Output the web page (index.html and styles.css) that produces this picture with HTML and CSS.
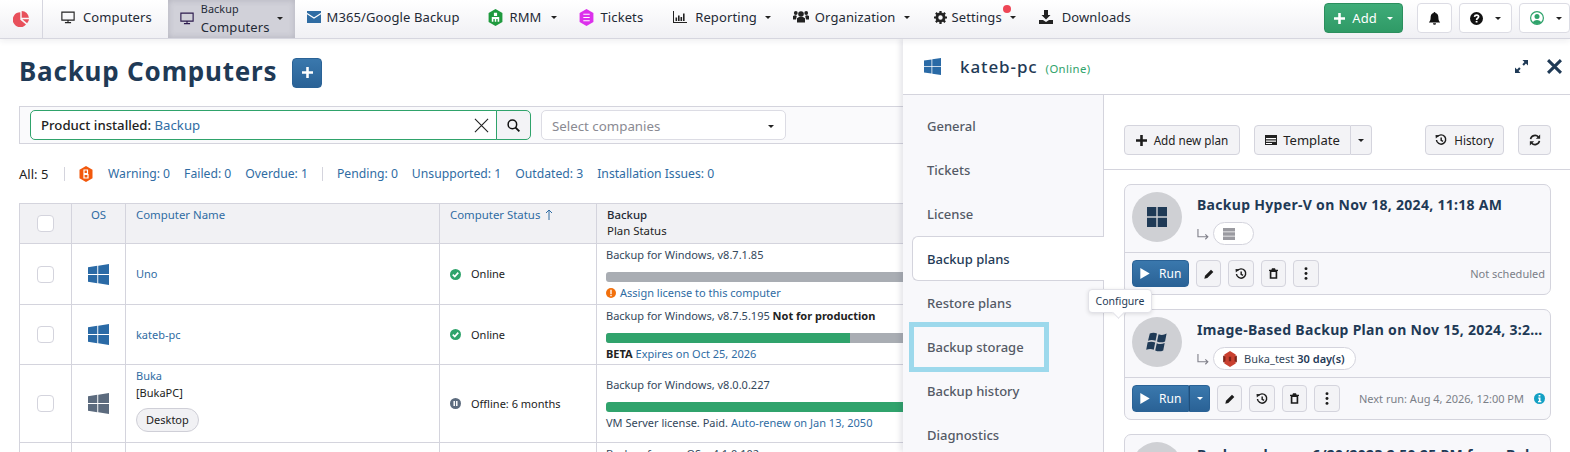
FILE: index.html
```html
<!DOCTYPE html>
<html lang="en">
<head>
<meta charset="utf-8">
<title>Backup Computers</title>
<link rel="stylesheet" href="styles.css">
</head>
<body>
<svg class="defs" width="0" height="0" aria-hidden="true">
  <symbol id="win" viewBox="0 0 24 24"><path d="M0 3.600 10.600 2.100V11.500H0ZM11.700 1.900 24 0V11.500H11.700ZM0 12.600H10.600V21.900L0 20.400ZM11.700 12.600H24V24L11.700 22.100Z"/></symbol>
  <symbol id="desk" viewBox="0 0 16 16"><path fill="none" stroke="currentColor" stroke-width="1.300" d="M1 2.500h14v9H1zM8 11.500v2.500M4.500 14.500h7"/></symbol>
  <symbol id="plus" viewBox="0 0 12 12"><path d="M4.600 0h2.800v4.600H12v2.800H7.400V12H4.600V7.400H0V4.600h4.600z"/></symbol>
  <symbol id="hist" viewBox="0 0 14 14"><path fill="none" stroke="currentColor" stroke-width="1.700" d="M2.600 3.400A5.400 5.400 0 1 1 1.700 7M7.200 4v3.300L9.400 8.600"/><path d="M.6 1.200 4.800 1.600 1 5.200z"/></symbol>
  <symbol id="pen" viewBox="0 0 12 12"><path d="M8.400.8 11.200 3.600 4 10.800.4 11.600 1.200 8z"/></symbol>
  <symbol id="trash" viewBox="0 0 12 14"><path fill-rule="evenodd" d="M4 0h4l.8 2H12v1.500H11V14H1V3.500H0V2h3.200zM3.200 5v7h5.600V5z"/></symbol>
  <symbol id="dots" viewBox="0 0 4 16"><circle cx="2" cy="2" r="1.800"/><circle cx="2" cy="8" r="1.800"/><circle cx="2" cy="14" r="1.800"/></symbol>
  <symbol id="check" viewBox="0 0 12 12"><circle cx="6" cy="6" r="6" fill="currentColor"/><path fill="none" stroke="#fff" stroke-width="1.800" d="M3 6.200 5.200 8.300 9 4"/></symbol>
  <symbol id="play" viewBox="0 0 12 14"><path fill="#fff" d="M0 0 12 7 0 14z"/></symbol>
  <symbol id="branch" viewBox="0 0 13 12"><path fill="none" stroke="currentColor" stroke-width="1.200" d="M1 0v8.500h10.500M9 5.800l2.800 2.700L9 11.200"/></symbol>
</svg>

<header class="topbar">
  <a class="logo"><svg class="ic16" viewBox="0 0 16 16"><path fill="#e8505b" d="M7.300 1.200V8.700L13 13.500A7.500 7.500 0 1 1 7.300 1.200Z"/><path fill="#e8505b" d="M8.700 0A7.400 7.400 0 0 1 15.900 6.800H8.700Z"/><path fill="#e8505b" d="M9.300 8.200H16A7.400 7.400 0 0 1 14.100 12.300Z"/></svg></a>
  <a class="nav nav-first"><svg class="ic14 ink"><use href="#desk"/></svg>Computers</a>
  <a class="nav nav-on"><svg class="ic14 purple"><use href="#desk"/></svg><span class="stack"><small>Backup</small><span>Computers</span></span><i class="caret"></i></a>
  <a class="nav after-on g6"><svg class="ic14" viewBox="0 0 14 12"><path fill="#2f6ca3" d="M0 0h14v12H0z"/><path fill="none" stroke="#fff" stroke-width="1.100" d="M0 2.500 7 7l7-4.500"/></svg>M365/Google Backup</a>
  <a class="nav has-caret g7 nav-rmm"><svg class="hexi" viewBox="0 0 14 16"><path fill="#1f9a3e" d="M7 0l6.500 3.800v8.400L7 16 .5 12.200V3.800z"/><path fill="#fff" d="M5.500 3.500h3v3h-3zM3.500 7.500h7V12h-1.500V9.500H7.700V12H6.300V9.500H5V12H3.500z"/></svg>RMM<i class="caret"></i></a>
  <a class="nav g7 nav-tickets"><svg class="hexi" viewBox="0 0 14 16"><path fill="#dc30ec" d="M7 0l6.500 3.800v8.400L7 16 .5 12.200V3.800z"/><path fill="none" stroke="#fff" stroke-width="1" d="M4 5h6M4 8h6M4 11h6"/></svg>Tickets</a>
  <a class="nav has-caret nav-report"><svg class="ic14" viewBox="0 0 14 12"><path fill="#222" d="M0 0h1v11h13v1H0zM2.500 6.500h1.600V10H2.500zM5 4.500h1.600V10H5zM7.500 6h1.600v4H7.500zM10 2.500h1.600V10H10z"/></svg>Reporting<i class="caret"></i></a>
  <a class="nav has-caret g6"><svg class="ic16" viewBox="0 0 16 14"><circle cx="8" cy="4" r="2.800" fill="#222"/><circle cx="2.800" cy="3" r="1.900" fill="#222"/><circle cx="13.200" cy="3" r="1.900" fill="#222"/><path fill="#222" d="M4 8.200Q8 5.500 12 8.200V12.500H4zM0 6q2.500-1.500 3.800 0L3 9.500H0zM16 6q-2.500-1.500-3.800 0l.8 3.500H16z"/></svg>Organization<i class="caret"></i></a>
  <a class="nav has-caret g4 nav-settings"><svg class="ic13" viewBox="0 0 14 14"><circle cx="7" cy="7" r="3.900" fill="none" stroke="#222" stroke-width="3"/><path fill="none" stroke="#222" stroke-width="2.400" d="M7 0v2.500M7 11.500V14M0 7h2.500M11.500 7H14M2 2l1.800 1.800M10.200 10.200 12 12M12 2l-1.800 1.800M3.800 10.200 2 12"/></svg><span class="dotted">Settings<b class="alert"></b></span><i class="caret tight"></i></a>
  <a class="nav g9"><svg class="ic14" viewBox="0 0 14 14"><path fill="#222" d="M5 0h4v5h2.500L7 9.500 2.500 5H5zM0 10h4l3 2 3-2h4v4H0z"/></svg>Downloads</a>
  <span class="grow"></span>
  <button class="add"><svg class="ic11 white"><use href="#plus"/></svg>Add<i class="caret white-c"></i></button>
  <button class="tool bell"><svg class="ic13" viewBox="0 0 14 15"><path fill="#111" d="M7 0a1 1 0 0 1 1 1.200C10.500 1.800 11.500 3.800 11.500 6.500c0 2.500.8 3.800 2 5.500H.5c1.200-1.700 2-3 2-5.500C2.500 3.800 3.500 1.800 6 1.200A1 1 0 0 1 7 0ZM5.200 13h3.600a1.800 1.800 0 0 1-3.600 0Z"/></svg></button>
  <button class="tool help"><svg class="ic13" viewBox="0 0 14 14"><circle cx="7" cy="7" r="7" fill="#111"/><path fill="none" stroke="#fff" stroke-width="1.800" d="M4.800 5.300C5 3.900 6 3.400 7.100 3.400c1.300 0 2.200.8 2.200 1.800 0 1.600-2.200 1.500-2.200 3.300"/><path fill="#fff" d="M6.100 9.600h2v1.700h-2z"/></svg><i class="caret"></i></button>
  <button class="tool user"><svg class="ic14" viewBox="0 0 14 14"><circle cx="7" cy="7" r="6.400" fill="none" stroke="#2fa36b" stroke-width="1.200"/><circle cx="7" cy="5.400" r="2.500" fill="#2fa36b"/><path fill="#2fa36b" d="M2.500 11.200Q7 6.800 11.500 11.200 7 15 2.500 11.200Z"/></svg><i class="caret"></i></button>
</header>

<div class="page">
  <main class="main">
    <div class="title-row">
      <h1>Backup Computers</h1>
      <button class="plus-btn"><svg class="ic11 white"><use href="#plus"/></svg></button>
    </div>
    <div class="filters">
      <div class="search"><span class="search-text"><b>Product installed:</b> <a>Backup</a></span><svg class="x-ic" viewBox="0 0 16 16"><path fill="none" stroke="#222" stroke-width="1.200" d="M1 1l14 14M15 1 1 15"/></svg></div>
      <button class="search-go"><svg class="ic13" viewBox="0 0 14 14"><circle cx="5.800" cy="5.800" r="4.600" fill="none" stroke="#111" stroke-width="1.600"/><path stroke="#111" stroke-width="2" d="M9 9l4.300 4.300"/></svg></button>
      <div class="select"><span>Select companies</span><i class="caret"></i></div>
    </div>
    <div class="stats">
      <span class="all">All: 5</span><span class="sep"></span>
      <svg class="hex" viewBox="0 0 14 16"><path fill="#f2580c" d="M7 0l6.500 3.800v8.400L7 16 .5 12.200V3.800z"/><path fill="none" stroke="#fff" stroke-width="1.200" d="M5 4h3.500v3.500H5zM5 8.500h4V12H5z"/></svg>
      <a>Warning: 0</a><a>Failed: 0</a><a>Overdue: 1</a><span class="sep wide"></span>
      <a>Pending: 0</a><a>Unsupported: 1</a><a>Outdated: 3</a><a>Installation Issues: 0</a>
    </div>
    <table class="grid">
      <colgroup><col class="c1"><col class="c2"><col class="c3"><col class="c4"><col class="c5"></colgroup>
      <thead>
        <tr class="r-head">
          <th class="mid"><span class="cb"></span></th>
          <th class="ctr"><a>OS</a></th>
          <th><a>Computer Name</a></th>
          <th><a>Computer Status<svg class="arrow" viewBox="0 0 8 11"><path fill="none" stroke="currentColor" stroke-width="1" d="M4 11V1M1 4l3-3 3 3"/></svg></a></th>
          <th class="plan-h"><b>Backup</b><span>Plan Status</span></th>
        </tr>
      </thead>
      <tbody>
        <tr class="r1">
          <td class="mid"><span class="cb"></span></td>
          <td class="ctr"><svg class="os"><use href="#win"/></svg></td>
          <td><a>Uno</a></td>
          <td><span class="st"><svg class="ic11 green"><use href="#check"/></svg>Online</span></td>
          <td class="plan"><div>Backup for Windows, v8.7.1.85</div><div class="bar"></div><div><svg class="warn" viewBox="0 0 12 12"><circle cx="6" cy="6" r="6" fill="#f2700c"/><path fill="#fff" d="M5.200 2.200h1.600v5H5.200zM5.200 8.200h1.600v1.600H5.200z"/></svg><a>Assign license to this computer</a></div></td>
        </tr>
        <tr class="r2">
          <td class="mid"><span class="cb"></span></td>
          <td class="ctr"><svg class="os"><use href="#win"/></svg></td>
          <td><a>kateb-pc</a></td>
          <td><span class="st"><svg class="ic11 green"><use href="#check"/></svg>Online</span></td>
          <td class="plan"><div>Backup for Windows, v8.7.5.195 <b>Not for production</b></div><div class="bar"><span class="fill" style="width:244px"></span></div><div><b>BETA</b> <a>Expires on Oct 25, 2026</a></div></td>
        </tr>
        <tr class="r3">
          <td class="mid"><span class="cb"></span></td>
          <td class="ctr"><svg class="os off"><use href="#win"/></svg></td>
          <td class="name3"><a>Buka</a><div class="alias">[BukaPC]</div><span class="pill">Desktop</span></td>
          <td><span class="st"><svg class="ic11" viewBox="0 0 12 12"><circle cx="6" cy="6" r="6" fill="#5c6b7e"/><path fill="#fff" d="M3.800 3.200h1.600v5.600H3.800zM6.600 3.200h1.600v5.600H6.600z"/></svg>Offline: 6 months</span></td>
          <td class="plan"><div>Backup for Windows, v8.0.0.227</div><div class="bar"><span class="fill" style="width:100%"></span></div><div>VM Server license. Paid. <a>Auto-renew on Jan 13, 2050</a></div></td>
        </tr>
        <tr class="r4">
          <td></td><td></td><td></td><td></td>
          <td class="plan"><div>Backup for macOS, v4.1.0.102</div></td>
        </tr>
      </tbody>
    </table>
  </main>

  <aside class="panel">
    <div class="p-head">
      <svg class="p-win"><use href="#win"/></svg>
      <span class="p-name">kateb-pc</span><span class="p-online">(Online)</span>
      <span class="grow"></span>
      <svg class="p-exp" viewBox="0 0 14 14"><path fill="#1f3a56" d="M8 0h6v6l-2.200-2.200-2.300 2.300-1.600-1.600 2.300-2.300zM6 14H0V8l2.200 2.200 2.300-2.300 1.600 1.600-2.300 2.300z"/></svg>
      <svg class="p-x" viewBox="0 0 14 14"><path fill="none" stroke="#1f3a56" stroke-width="2.800" d="M1 1l12 12M13 1 1 13"/></svg>
    </div>
    <div class="p-body">
      <nav class="side">
        <a>General</a><a>Tickets</a><a>License</a><a class="on">Backup plans</a><a>Restore plans</a><a class="hl">Backup storage</a><a>Backup history</a><a>Diagnostics</a>
      </nav>
      <section class="content">
        <div class="toolbar">
          <button class="btn w-add"><svg class="ic11 dark"><use href="#plus"/></svg>Add new plan</button>
          <div class="split"><button class="btn tpl"><svg class="ic12" viewBox="0 0 12 10"><path fill="#222" d="M0 0h12v10H0z"/><path fill="#fff" d="M1 3h10v1.200H1zM1 5.500h10v1.200H1zM1 8h6v1H1z"/></svg>Template</button><button class="btn caret-b"><i class="caret"></i></button></div>
          <span class="grow"></span>
          <button class="btn w-hist"><svg class="ic12 dark"><use href="#hist"/></svg>History</button>
          <button class="btn sq"><svg class="ic12" viewBox="0 0 14 14"><path fill="none" stroke="#222" stroke-width="1.900" d="M1.800 6A5.300 5.300 0 0 1 11 3.500M12.200 8A5.300 5.300 0 0 1 3 10.500"/><path fill="#222" d="M13 .5v5h-5zM1 13.500v-5h5z"/></svg></button>
        </div>
        <div class="cards">
          <article class="card">
            <div class="card-top">
              <span class="avatar"><svg class="ic20" viewBox="0 0 20 20"><path fill="#1f3a56" d="M0 0h9.300v9.300H0zM10.700 0H20v9.300h-9.300zM0 10.700h9.300V20H0zM10.700 10.700H20V20h-9.300z"/></svg></span>
              <div class="card-info">
                <h3>Backup Hyper-V on Nov 18, 2024, 11:18 AM</h3>
                <div class="dest"><svg class="branch"><use href="#branch"/></svg><span class="dest-pill empty"><svg class="ic12" viewBox="0 0 12 12"><path fill="#9a9aa0" d="M0 0h12v3.400H0zM0 4.300h12v3.400H0zM0 8.600h12V12H0z"/></svg></span></div>
              </div>
            </div>
            <div class="card-foot">
              <button class="run"><svg class="ic-play"><use href="#play"/></svg>Run</button>
              <button class="btn act"><svg class="ic10 dark"><use href="#pen"/></svg></button>
              <button class="btn act wide-act"><svg class="ic12 dark"><use href="#hist"/></svg></button>
              <button class="btn act"><svg class="ic-tr dark"><use href="#trash"/></svg></button>
              <button class="btn act wide-act"><svg class="ic-dots dark"><use href="#dots"/></svg></button>
              <span class="grow"></span>
              <span class="sched">Not scheduled</span>
            </div>
          </article>
          <article class="card">
            <div class="card-top">
              <span class="avatar"><svg class="ic24" viewBox="0 0 20 20"><path fill="#1f3a56" d="M4 3Q7 1.500 10 3L8.800 9Q5.500 7.500 2.500 9ZM11.300 3.500Q14.500 5 18 3L16.700 9.500Q13.500 11 10 9.500ZM2.200 10.300Q5.500 9 8.500 10.500L7.300 16.500Q4.500 15 1 16.500ZM9.800 11Q13 12.500 16.400 10.800L15.200 17Q12 18.500 8.500 17Z"/></svg></span>
              <div class="card-info">
                <h3>Image-Based Backup Plan on Nov 15, 2024, 3:26 PM</h3>
                <div class="dest"><svg class="branch"><use href="#branch"/></svg><span class="dest-pill"><svg class="s3" viewBox="0 0 12 14"><path fill="#c9402f" d="M6 0l5 3v8l-5 3-5-3V3z"/><path fill="#7e2318" d="M0 4l2 1v4l-2 1zM12 4l-2 1v4l2 1zM5 5h2v4H5z"/></svg>Buka_test <b>30 day(s)</b></span></div>
              </div>
            </div>
            <div class="card-foot">
              <span class="run-split"><button class="run joined"><svg class="ic-play"><use href="#play"/></svg>Run</button><button class="run-c"><i class="caret white-c"></i></button></span>
              <button class="btn act"><svg class="ic10 dark"><use href="#pen"/></svg></button>
              <button class="btn act wide-act"><svg class="ic12 dark"><use href="#hist"/></svg></button>
              <button class="btn act"><svg class="ic-tr dark"><use href="#trash"/></svg></button>
              <button class="btn act wide-act"><svg class="ic-dots dark"><use href="#dots"/></svg></button>
              <span class="grow"></span>
              <span class="sched">Next run: Aug 4, 2026, 12:00 PM</span>
              <svg class="info" viewBox="0 0 12 12"><circle cx="6" cy="6" r="6" fill="#14a0c4"/><path fill="#fff" d="M5 2.200h2v1.700H5zM4.600 5h2.500v3.800h.9V10H4.400V8.800h.9V6.200h-.7z"/></svg>
            </div>
          </article>
          <article class="card">
            <div class="card-top">
              <span class="avatar"></span>
              <div class="card-info"><h3>Backup plan on 6/20/2023 2:50:25 PM from Buka</h3></div>
            </div>
          </article>
        </div>
      </section>
    </div>
    <div class="tooltip">Configure</div>
  </aside>
</div>
</body>
</html>
```

FILE: styles.css
```css
* { box-sizing: border-box; }
html, body { margin: 0; height: 100%; }
body { width: 1570px; height: 452px; overflow: hidden; background: #fff; font-family: "Noto Sans", "Open Sans", sans-serif; font-size: 11px; color: #222; }
button { font: inherit; padding: 0; margin: 0; cursor: pointer; }
svg { fill: currentColor; flex: none; }
.defs { position: absolute; }
a { color: inherit; text-decoration: none; }
.grow { flex: 1; }

.ic10 { width: 10px; height: 10px; }
.ic11 { width: 11px; height: 11px; }
.ic12 { width: 12px; height: 12px; }
.ic13 { width: 13px; height: 13px; }
.ic14 { width: 14px; height: 14px; }
.ic16 { width: 16px; height: 16px; }
.ic20 { width: 20px; height: 20px; }
.ic24 { width: 24px; height: 24px; }
.ink { color: #222; }
.purple { color: #2c1a4d; }
.white { color: #fff; }
.dark { color: #1c1c1c; }
.green { color: #2fa36b; }

.caret { display: inline-block; width: 0; height: 0; margin-left: 8px; border-left: 3.5px solid transparent; border-right: 3.5px solid transparent; border-top: 3.5px solid #222; }
.white-c { border-top-color: #fff; }

/* top bar */
.topbar { display: flex; align-items: stretch; height: 39px; border-bottom: 1px solid #d6d6df; background: linear-gradient(#fff, #f0f0f4); box-shadow: 0 2px 6px rgba(40,40,70,.08); position: relative; z-index: 3; }
.logo { width: 43px; border-right: 1px solid #d6d6df; display: flex; align-items: center; justify-content: center; }
.nav { display: flex; align-items: center; padding: 0 13px 4px 15px; font-size: 13px; color: #1f2a36; letter-spacing: .1px; }
.nav svg { margin-right: 8px; }
.nav .caret { margin-left: 9px; }
.nav .caret.tight { margin-left: 8px; }
.has-caret { padding-right: 9px; }
.g4 svg { margin-right: 4px; }
.g6 svg { margin-right: 6px; }
.g7 svg { margin-right: 7px; }
.g9 svg { margin-right: 9px; }
.hexi { width: 15px; height: 17px; }
.nav-first { padding-left: 18px; padding-right: 16px; }
.after-on { padding-left: 12px; }
.nav-rmm { padding-right: 7px; }
.nav-tickets { padding-right: 15px; }
.nav-report { padding-right: 7px; }
.nav-report .caret { margin-left: 8px; }
.nav-settings { padding-right: 8px; }
.nav-on { background: #d1d1d9; box-shadow: inset 0 0 6px rgba(60,60,80,.2); padding: 1px 12px 0 12px; }
.nav-on svg { margin-right: 7px; margin-bottom: 3px; }
.nav-on .caret { margin-left: 7px; margin-bottom: 3px; }
.stack { display: flex; flex-direction: column; }
.stack small { font-size: 10.8px; line-height: 12px; margin-bottom: 3px; }
.stack span { line-height: 18px; }
.dotted { position: relative; }
.alert { position: absolute; right: -9px; top: -3px; width: 8px; height: 8px; border-radius: 50%; background: #ee4656; }
.add { align-self: flex-start; width: 79px; height: 30px; margin: 3px 14px 0 0; display: flex; align-items: center; justify-content: center; gap: 7px; color: #fff; font-size: 13px; background: linear-gradient(#3fac79, #2f9a66); border: 1px solid #2b8f5e; border-radius: 4px; }
.add .caret { margin-left: 3px; }
.tool { align-self: flex-start; height: 30px; margin: 3px 7px 0 0; display: flex; align-items: center; background: #fff; border: 1px solid #dcdce4; border-radius: 4px; padding-left: 10px; }
.tool .caret { margin-left: 12px; }
.bell { width: 35px; justify-content: center; padding-left: 0; }
.help { width: 53px; }
.user { width: 51px; margin-right: 0; }

/* main */
.page { position: relative; height: 413px; overflow: hidden; }
.main { padding: 0 0 0 19px; width: 1500px; }
.title-row { display: flex; align-items: center; gap: 15px; height: 67px; }
h1 { margin: 0 0 3px; font-size: 26px; font-weight: 700; color: #1f3a56; letter-spacing: .8px; }
.plus-btn { width: 30px; height: 30px; display: flex; align-items: center; justify-content: center; background: linear-gradient(#3a78ad, #2a6296); border: 1px solid #2a6296; border-radius: 4px; }
.filters { display: flex; align-items: center; width: 1000px; height: 38px; padding-left: 10px; border: 1px solid #d4d4dd; background: #fafafc; }
.search { display: flex; align-items: center; justify-content: space-between; width: 467px; height: 30px; padding: 0 7px 0 10px; background: #fff; border: 1px solid #2fa36b; border-radius: 5px 0 0 5px; font-size: 13.2px; }
.search b { font-weight: 500; color: #222; }
.search a { color: #2f6ca3; }
.x-ic { width: 15px; height: 15px; }
.search-go { width: 35px; height: 30px; margin-left: -1px; display: flex; align-items: center; justify-content: center; background: #f3f3f6; border: 1px solid #2fa36b; border-radius: 0 5px 5px 0; }
.select { display: flex; align-items: center; justify-content: space-between; width: 245px; height: 30px; margin-left: 10px; padding: 2px 11px 0 10px; background: #fff; border: 1px solid #dcdce4; border-radius: 5px; font-size: 13.3px; color: #8a8a92; }
.stats { display: flex; align-items: center; height: 59px; color: #2f6ca3; font-size: 12.2px; gap: 14px; }
.all { color: #222; font-size: 13px; width: 31px; }
.sep { width: 1px; height: 14px; background: #d4d4dd; }
.hex { width: 14px; height: 16px; margin-right: 1px; }
.grid { table-layout: fixed; width: 1200px; border-collapse: collapse; }
.c1 { width: 52px; } .c2 { width: 54px; } .c3 { width: 314px; } .c4 { width: 157px; }
.grid th, .grid td { border: 1px solid #d4d4dd; padding: 0 10px; font-weight: 400; text-align: left; vertical-align: middle; font-size: 11px; line-height: 16px; color: #222; overflow: hidden; white-space: nowrap; }
.grid thead th { background: #f1f1f4; vertical-align: top; padding-top: 3px; color: #2f6ca3; font-size: 11.4px; }
.grid thead th.mid { vertical-align: middle; padding-top: 0; }
.grid a { color: #2f6ca3; }
.grid .mid, .grid .ctr { text-align: center; padding-left: 0; padding-right: 0; }
.arrow { width: 8px; height: 11px; margin-left: 5px; vertical-align: -1px; }
.grid thead .plan-h { color: #222; padding-top: 3px; }
.plan-h b { display: block; font-weight: 500; color: #1f2a36; }
.plan-h span { display: block; }
.r-head { height: 40px; }
.r1 { height: 61px; }
.r2 { height: 60px; }
.r3 { height: 78px; }
.r4 { height: 30px; }
.r4 td { vertical-align: top; }
.grid .r4 .plan { padding-top: 3px; }
.cb { display: inline-block; vertical-align: middle; width: 17px; height: 17px; background: #fff; border: 1px solid #d4d4dd; border-radius: 4px; }
.os { width: 21px; height: 21px; color: #2a6aa6; vertical-align: middle; }
.os.off { color: #5c6b7e; }
.st { display: flex; align-items: center; gap: 10px; }
.grid .plan { padding-left: 9px; color: #33475b; }
.plan b { font-weight: 700; color: #222; }
.bar { position: relative; height: 10px; margin: 9px 0 3px; background: #a9adb3; border-radius: 3px 0 0 3px; overflow: hidden; }
.fill { display: block; height: 10px; background: #30a36c; }
.warn { width: 10px; height: 10px; margin-right: 4px; vertical-align: -1px; }
.grid .name3 { line-height: 17px; padding-bottom: 8px; }
.alias { color: #222; }
.pill { display: inline-block; margin-top: 7px; height: 24px; line-height: 21px; padding: 0 9px; background: #f1f1f4; border: 1px solid #cfcfd7; border-radius: 12px; color: #222; }

/* panel */
.panel { position: absolute; left: 903px; top: 0; right: 0; bottom: 0; background: #fff; box-shadow: -3px 0 5px rgba(50,50,80,.12); z-index: 2; }
.p-head { display: flex; align-items: center; height: 56px; padding: 0 8px 0 21px; border-bottom: 1px solid #d4d4dd; }
.p-win { width: 17px; height: 17px; color: #2a6aa6; margin-right: 19px; }
.p-name { font-size: 17px; font-weight: 500; color: #1f3a56; letter-spacing: .9px; }
.p-online { margin-left: 8px; margin-top: 4px; font-size: 11.3px; color: #2fa36b; letter-spacing: .4px; }
.p-exp { width: 13px; height: 13px; margin-right: 19px; }
.p-x { width: 15px; height: 15px; }
.p-body { display: flex; height: 357px; }
.side { width: 201px; flex: none; padding: 9px 0 0 9px; background: #f8f8fb; border-right: 1px solid #d4d4dd; display: flex; flex-direction: column; }
.side a { display: flex; align-items: center; height: 44px; flex: none; padding-left: 15px; font-size: 13px; font-weight: 500; color: #545a66; position: relative; }
.side .on { background: #fff; color: #1f3a56; width: 192px; height: 45px; border: 1px solid #d4d4dd; border-right: 0; border-radius: 6px 0 0 6px; padding-left: 14px; }
.side .hl { width: 140px; height: 50px; margin: -3px 0 -3px -3px; padding-left: 13px; border: 5px solid #9dd9ec; }
.content { flex: 1; min-width: 0; }
.toolbar { display: flex; align-items: flex-start; gap: 14px; height: 75px; padding: 30px 19px 0 20px; border-bottom: 1px solid #d4d4dd; }
.btn { display: inline-flex; align-items: center; justify-content: center; height: 30px; gap: 7px; background: #f3f3f6; border: 1px solid #d4d4dd; border-radius: 4px; font-size: 11.7px; color: #222; }
.w-add { width: 116px; }
.w-hist { width: 79px; }
.split { display: flex; }
.tpl { width: 97px; font-size: 13px; border-radius: 4px 0 0 4px; gap: 6px; }
.caret-b { width: 21px; border-left: 0; border-radius: 0 4px 4px 0; }
.caret-b .caret { margin: 0; }
.sq { width: 33px; }
.cards { padding: 14px 19px 0 20px; display: flex; flex-direction: column; gap: 14px; }
.card { height: 111px; background: #f8f8fb; border: 1px solid #d4d4dd; border-radius: 7px; flex: none; }
.card-top { display: flex; height: 68px; padding: 7px 3px 0 7px; gap: 15px; border-bottom: 1px solid #d4d4dd; }
.avatar { width: 50px; height: 50px; flex: none; border-radius: 50%; background: #cfd0d4; display: flex; align-items: center; justify-content: center; }
.card-info { min-width: 0; flex: 1; padding-top: 2px; }
h3 { margin: 0; font-size: 14px; line-height: 22px; font-weight: 700; color: #1f3a56; letter-spacing: .3px; white-space: nowrap; overflow: hidden; text-overflow: ellipsis; }
.dest { display: flex; align-items: center; gap: 4px; margin-top: 6px; }
.branch { width: 12px; height: 11px; color: #80808a; margin-top: 2px; }
.dest-pill { display: inline-flex; align-items: center; gap: 7px; height: 23px; padding: 0 10px 0 9px; background: #fff; border: 1px solid #d4d4dd; border-radius: 12px; font-size: 11px; color: #33475b; }
.dest-pill.empty { width: 41px; }
.dest-pill b { color: #1f3a56; font-weight: 600; margin-left: -4px; }
.s3 { width: 14px; height: 16px; }
.card-foot { display: flex; align-items: center; gap: 7px; height: 41px; padding: 0 5px 0 7px; }
.run { display: inline-flex; align-items: center; gap: 9px; width: 57px; height: 27px; padding-left: 7px; background: linear-gradient(#3a78ad, #2a6296); border: 1px solid #2a6296; border-radius: 4px; color: #fff; font-size: 12px; }
.run-split { display: flex; }
.joined { border-radius: 4px 0 0 4px; }
.run-c { width: 21px; height: 27px; display: flex; align-items: center; justify-content: center; background: linear-gradient(#3a78ad, #2a6296); border: 1px solid #2a6296; border-left: 1px solid #1f4f7c; border-radius: 0 4px 4px 0; }
.run-c .caret { margin: 0; }
.ic-play { width: 10px; height: 11px; }
.act { width: 25px; height: 27px; }
.wide-act { width: 26px; }
.ic-tr { width: 9px; height: 11px; }
.ic-dots { width: 4px; height: 13px; }
.sched { font-size: 11px; color: #7b7f88; }
.info { width: 11px; height: 11px; margin-left: 3px; }
.tooltip { position: absolute; left: 185px; top: 250px; width: 64px; height: 24px; display: flex; align-items: center; justify-content: center; background: #fff; border: 1px solid #e2e2e8; border-radius: 4px; font-size: 10.5px; color: #1f3a56; box-shadow: 0 1px 4px rgba(0,0,0,.12); }
.tooltip::after { content: ""; position: absolute; left: 25px; bottom: -5px; width: 8px; height: 8px; background: #fff; transform: rotate(45deg); border-right: 1px solid #e2e2e8; border-bottom: 1px solid #e2e2e8; }
```
